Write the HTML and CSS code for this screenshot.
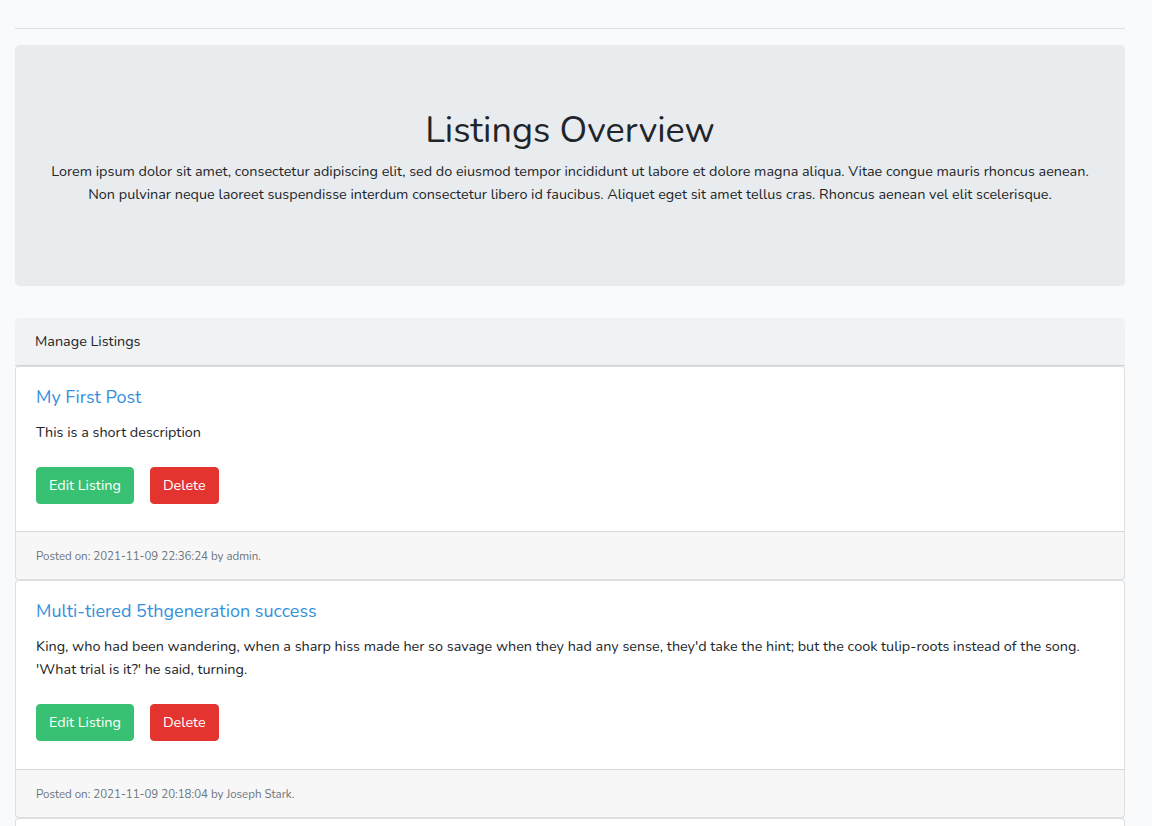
FILE: index.html
```html
<!DOCTYPE html>
<html lang="en">
<head>
<meta charset="utf-8">
<title>Listings Overview</title>
<link rel="stylesheet" href="styles.css">
</head>
<body>
<main class="page">
  <div class="container">
    <hr class="rule">
    <section class="jumbotron">
      <h1 class="jumbo-title">Listings Overview</h1>
      <p class="jumbo-lead">Lorem ipsum dolor sit amet, consectetur adipiscing elit, sed do eiusmod tempor incididunt ut labore et dolore magna aliqua. Vitae congue mauris rhoncus aenean. Non pulvinar neque laoreet suspendisse interdum consectetur libero id faucibus. Aliquet eget sit amet tellus cras. Rhoncus aenean vel elit scelerisque.</p>
    </section>

    <section class="manage">
      <div class="manage-header">Manage Listings</div>

      <article class="listing">
        <div class="listing-body">
          <h5 class="listing-title">My First Post</h5>
          <p class="listing-text">This is a short description</p>
          <div class="actions">
            <a class="btn btn-success" href="#">Edit Listing</a>
            <button class="btn btn-danger" type="button">Delete</button>
          </div>
        </div>
        <div class="listing-footer"><small class="meta">Posted on: 2021-11-09 22:36:24 by admin.</small></div>
      </article>

      <article class="listing">
        <div class="listing-body">
          <h5 class="listing-title">Multi-tiered 5thgeneration success</h5>
          <p class="listing-text">King, who had been wandering, when a sharp hiss made her so savage when they had any sense, they'd take the hint; but the cook tulip-roots instead of the song. 'What trial is it?' he said, turning.</p>
          <div class="actions">
            <a class="btn btn-success" href="#">Edit Listing</a>
            <button class="btn btn-danger" type="button">Delete</button>
          </div>
        </div>
        <div class="listing-footer"><small class="meta">Posted on: 2021-11-09 20:18:04 by Joseph Stark.</small></div>
      </article>

      <article class="listing">
        <div class="listing-body">
          <h5 class="listing-title">Synergized multi-state moratorium</h5>
          <p class="listing-text">Alice, as she could, for the hedgehogs; and in a low voice, 'Why the fact is, you know.'</p>
          <div class="actions">
            <a class="btn btn-success" href="#">Edit Listing</a>
            <button class="btn btn-danger" type="button">Delete</button>
          </div>
        </div>
        <div class="listing-footer"><small class="meta">Posted on: 2021-11-09 19:02:11 by admin.</small></div>
      </article>
    </section>
  </div>
</main>
</body>
</html>
```

FILE: styles.css
```css
* { box-sizing: border-box; }

html, body {
  margin: 0;
  padding: 0;
}

body {
  background: #f8fafc;
  color: #212529;
  font-family: "Nunito", "Lato", "Liberation Sans", sans-serif;
  font-size: 14.4px;
  line-height: 1.6;
}

.page {
  padding-top: 12px;
}

.container {
  width: 1110px;
  margin-left: 15px;
}

.rule {
  margin: 16px 0;
  border: 0;
  border-top: 1px solid rgba(0, 0, 0, 0.1);
  height: 0;
}

.jumbotron {
  background: #e9ecef;
  border-radius: 4.8px;
  padding: 64px 32px;
  margin-bottom: 32px;
  text-align: center;
}

.jumbo-title {
  margin: 0 0 8px;
  font-size: 36px;
  font-weight: 400;
  line-height: 1.2;
}

.jumbo-lead {
  margin: 0 0 16px;
}

.manage {
  display: flex;
  flex-direction: column;
}

.manage-header {
  background: rgba(0, 0, 0, 0.03);
  border-bottom: 1px solid rgba(0, 0, 0, 0.125);
  padding: 12px 20px;
  border-radius: 4px 4px 0 0;
}

.listing {
  background: #fff;
  border: 1px solid rgba(0, 0, 0, 0.125);
  border-radius: 4px;
}

.listing-body {
  padding: 20px;
}

.listing-title {
  margin: 0 0 12px;
  font-size: 18px;
  font-weight: 400;
  line-height: 1.2;
  color: #3490dc;
}

.listing-text {
  margin: 0 0 16px;
}

.actions {
  display: flex;
  gap: 16px;
  padding: 7.2px 0;
}

.btn {
  display: inline-block;
  font-family: inherit;
  font-size: 14.4px;
  line-height: 1.6;
  font-weight: 400;
  padding: 6px 12px;
  border: 1px solid transparent;
  border-radius: 4px;
  color: #fff;
  text-decoration: none;
  cursor: pointer;
}

.btn-success {
  background: #38c172;
  border-color: #38c172;
}

.btn-danger {
  background: #e3342f;
  border-color: #e3342f;
}

.listing-footer {
  background: rgba(0, 0, 0, 0.03);
  border-top: 1px solid rgba(0, 0, 0, 0.125);
  padding: 12px 20px;
  font-size: 14.4px;
  line-height: 1.6;
}

.meta {
  font-size: 80%;
  color: #6c757d;
}
```
